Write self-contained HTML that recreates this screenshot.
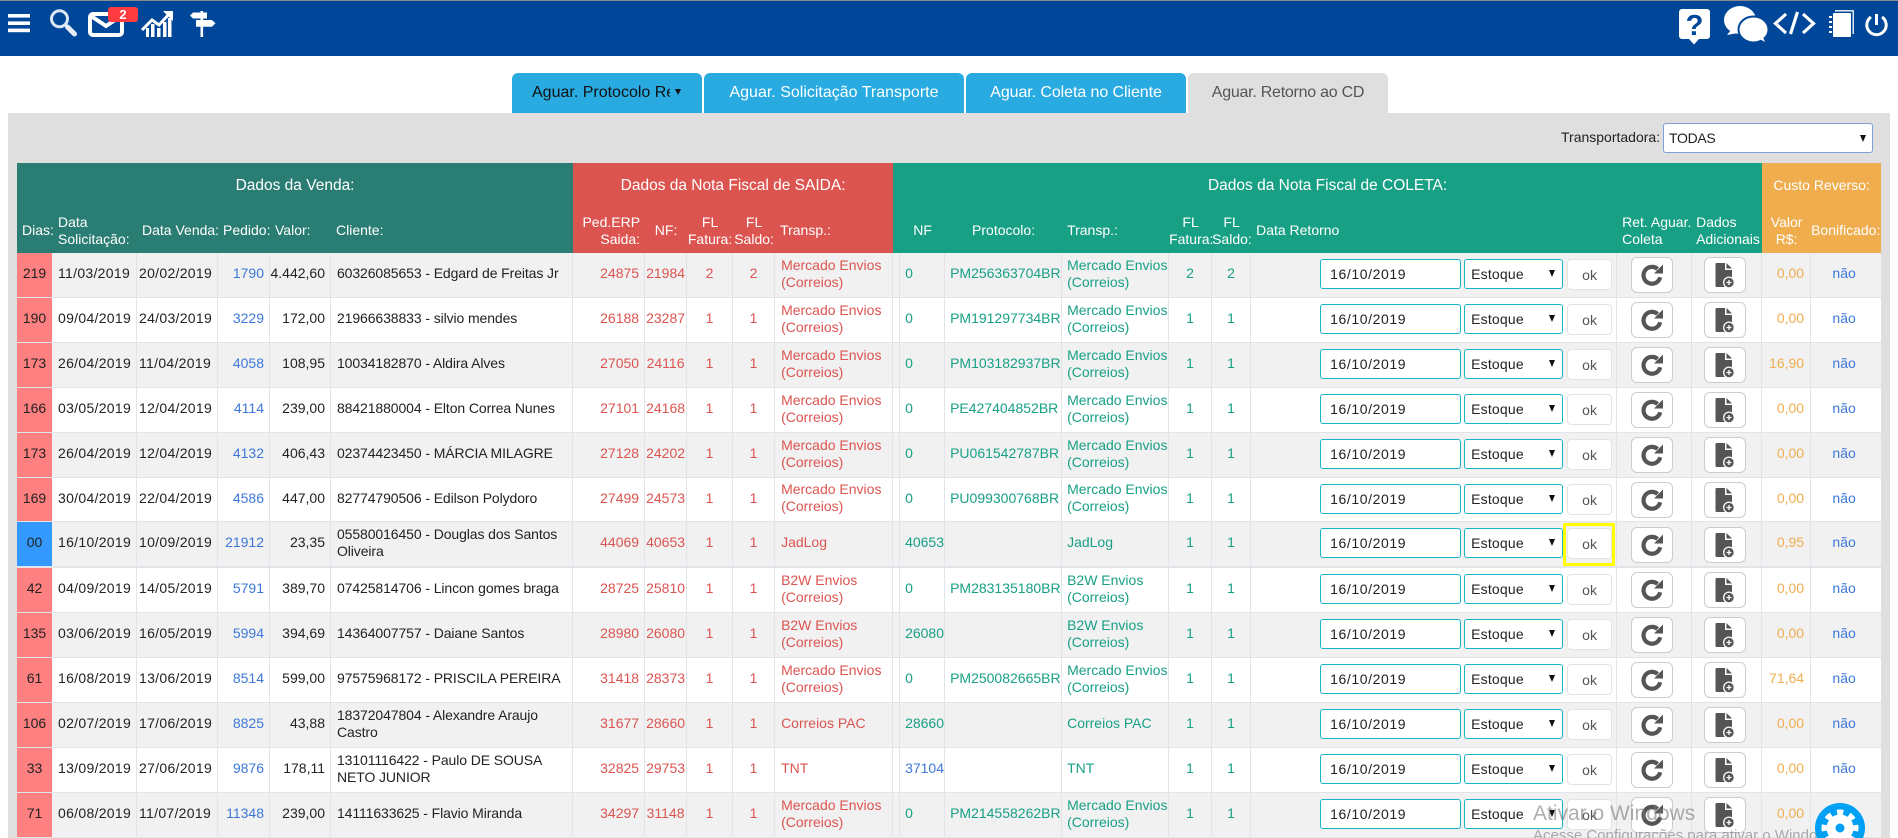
<!DOCTYPE html>
<html lang="pt-BR"><head><meta charset="utf-8"><title>Aguar. Retorno ao CD</title>
<style>
*{box-sizing:border-box}
html,body{margin:0;padding:0;width:1898px;height:838px;overflow:hidden;background:#fff;font:14px/17px "Liberation Sans",sans-serif;color:#222}
.page{position:relative;width:1898px;height:838px;overflow:hidden;background:#fff}
.bar{position:absolute;left:0;top:0;width:1898px;height:56px;background:#004799;border-top:1px solid #8a8a8a}
.ic{position:absolute;left:0;top:0}
.panel{position:absolute;left:8px;top:113px;width:1882px;height:725px;background:#dfdfdf}
.tab{position:absolute;top:73px;height:40px;background:#29abe2;color:#fff;border-radius:6px 6px 0 0;font-size:16px;line-height:39px;text-align:center;white-space:nowrap;overflow:hidden}
.t1{left:512px;width:190px;color:#111;text-align:left;padding-left:20px}
.t1 span{display:block;width:138px;overflow:hidden}
.t1:after{content:"";position:absolute;left:163px;top:16px;border:3.5px solid transparent;border-top:6px solid #111;border-bottom:0}
.lbl{position:absolute;left:1561px;top:129px;color:#222;white-space:nowrap}
.sel{position:absolute;left:1663px;top:123px;width:210px;height:30px;background:#fff;border:1px solid #7f9fd6;border-radius:3px;font:14px "Liberation Sans",sans-serif;letter-spacing:-.3px;color:#222;padding-left:5px;appearance:none;-webkit-appearance:none}
.arr{position:absolute;left:1860px;top:135px;border:3.5px solid transparent;border-top:7px solid #111;border-bottom:0}
table{position:absolute;left:17px;top:163px;width:1864px;border-collapse:separate;border-spacing:0;table-layout:fixed}
th{font-weight:400;color:#fff;padding:0;height:45px;text-align:left;white-space:nowrap}
.g1{background:#2a7d73}.g2{background:#dc5450}.g3{background:#18a085}.g4{background:#f0ad4e}
.h{font-size:15.5px;text-align:center}
.c{text-align:center}.r{text-align:right;padding-right:5px}.p{padding-left:5px}
td{height:45px;padding:0 0 3px;border-right:1px solid #e1e4e8;border-bottom:1px solid #e1e4e8;vertical-align:middle;white-space:nowrap;position:relative;background:#fff}
tbody tr:nth-child(odd) td{background:#f1f1f2}
tbody td:nth-child(1){background:#ff8080!important;text-align:center;border-right-color:#f1f1f2}
tbody td.bl{background:#3399ff!important}
td:nth-child(2){padding-left:5px;letter-spacing:.3px}
td:nth-child(3){padding-left:2px;letter-spacing:.3px}
td:nth-child(4){text-align:right;padding-right:5px;color:#3d78d8}
td:nth-child(5){text-align:right;padding-right:5px}
td:nth-child(6){padding-left:6px;letter-spacing:-.1px}
td:nth-child(7){text-align:right;padding-right:5px;color:#dc5450}
td:nth-child(8),td:nth-child(9),td:nth-child(10){text-align:center;color:#dc5450}
td:nth-child(11){padding-left:6px;color:#dc5450}
td:nth-child(13),td:nth-child(14),td:nth-child(15){padding-left:5px;color:#18a085}
td:nth-child(16),td:nth-child(17){text-align:center;color:#18a085}
td:nth-child(21){text-align:right;padding-right:6px;color:#f0ad4e}
td:nth-child(22){text-align:center;padding-right:4px;color:#3d78d8;border-right:0}
td .b{color:#3d78d8}
tbody tr.z td{height:44px}
tbody tr.x td{height:46px;border-bottom:2px solid #e1e4e8}
td input{position:absolute;left:69px;top:6px;width:141px;height:30px;border:1px solid #17b5c9;border-radius:3px;background:#fff;font:14px "Liberation Sans",sans-serif;letter-spacing:.6px;color:#222;padding:0 0 0 9px}
td select{position:absolute;left:213px;top:6px;width:99px;height:30px;border:1px solid #17b5c9;border-radius:3px;background:#fff;font:14px "Liberation Sans",sans-serif;letter-spacing:.2px;color:#222;padding-left:6px;appearance:none;-webkit-appearance:none}
td:nth-child(18):after{content:"";position:absolute;left:298px;top:17px;border:3.5px solid transparent;border-top:7px solid #111;border-bottom:0}
td button{position:absolute;top:6px;left:316px;width:45px;height:31px;border:1px solid #e3e3e3;border-radius:4px;background:#fff;color:#555;font:14px "Liberation Sans",sans-serif;padding:0}
td button.i{top:4px;left:14px;width:42px;height:36px;border:1px solid #ccc;border-radius:6px}
td button.j{left:12px}
td button svg{position:absolute}
.y{position:absolute;left:312px;top:1px;width:52px;height:43px;border:3px solid #ff0}
.gear{position:absolute;left:1815px;top:803px}
.wm{position:absolute;left:1533px;top:802px;font-size:21px;line-height:24px;color:rgba(120,120,120,.6);white-space:nowrap}
.wm2{position:absolute;left:1533px;top:827px;font-size:15px;line-height:18px;color:rgba(120,120,120,.6);white-space:nowrap}
</style></head><body>
<svg width="0" height="0" style="position:absolute">
<symbol id="rf" viewBox="0 0 22 22"><path d="M16.600 5A8.440 8.440 0 1 0 19.200 13.300" fill="none" stroke="#555" stroke-width="4.200"/><path d="M13 9.500H22V.5z" fill="#555"/></symbol>
<symbol id="dc" viewBox="0 0 24 26"><path d="M1.500 0H10V7H17V23a1 1 0 0 1-1 1H1.500a1 1 0 0 1-1-1V1a1 1 0 0 1 1-1z" fill="#555"/><path d="M11.500 0L17 5.500H11.500z" fill="#555"/><circle cx="14" cy="19.500" r="6" fill="#fff"/><circle cx="14" cy="19.500" r="4.700" fill="#555"/><path d="M11.500 19.500h5M14 17v5" stroke="#fff" stroke-width="1.300"/></symbol>
</svg>
<div class="page">
<div class="bar"></div>
<svg class="ic" width="1898" height="56" viewBox="0 0 1898 56">
<g fill="#fff"><rect x="8" y="14" width="22" height="3.6"/><rect x="8" y="21.400" width="22" height="3.6"/><rect x="8" y="28.600" width="22" height="3.6"/></g>
<circle cx="59.500" cy="18.800" r="8" fill="none" stroke="#dbe8f4" stroke-width="3"/><path d="M67.500 27L74.500 34" stroke="#e6eff8" stroke-width="5" stroke-linecap="round"/>
<rect x="90" y="14" width="32" height="21" rx="3" fill="none" stroke="#fff" stroke-width="4"/><path d="M91 16L106 26L121 16" fill="none" stroke="#fff" stroke-width="4"/>
<rect x="108" y="7" width="30" height="15" rx="3" fill="#ff3b3f"/><text x="123" y="19" font-size="13" font-weight="700" fill="#fff" text-anchor="middle" font-family="Liberation Sans">2</text>
<path d="M142 30L152 20L159 25L170 13" fill="none" stroke="#fff" stroke-width="3"/><path d="M163 11H173V21z" fill="#fff"/>
<g fill="#fff"><rect x="146" y="28" width="3" height="9"/><rect x="151" y="24" width="3.5" height="13"/><rect x="157" y="28" width="3.5" height="9"/><rect x="163" y="22" width="3.5" height="15"/><rect x="168" y="18" width="3.5" height="19"/></g>
<g fill="#fff"><rect x="200.500" y="11" width="2.6" height="26"/><path d="M193 12.500H207V18.500H193L190 15.500z"/><path d="M196 20H212L215.500 23.300L212 26.700H196z"/></g>
<path d="M1682 9H1707a3 3 0 0 1 3 3V36a3 3 0 0 1-3 3H1699L1694 44.500L1689 39H1682a3 3 0 0 1-3-3V12a3 3 0 0 1 3-3z" fill="#fff"/>
<text x="1694.500" y="35" font-size="29" font-weight="700" fill="#004799" text-anchor="middle" font-family="Liberation Sans">?</text>
<ellipse cx="1740" cy="20" rx="16" ry="14" fill="#fff"/><path d="M1731 30L1727 35L1738 33z" fill="#fff"/>
<ellipse cx="1753.500" cy="29.500" rx="15" ry="13" fill="#fff" stroke="#004799" stroke-width="2"/><path d="M1758 38L1765 42L1762 35z" fill="#fff"/>
<g fill="none" stroke="#fff" stroke-width="3.200"><path d="M1786 14L1775.500 23.500L1786 33"/><path d="M1797.500 12L1790.500 34"/><path d="M1803 14L1813.500 23.500L1803 33"/></g>
<rect x="1833" y="13" width="18" height="24" rx="1" fill="#fff"/><path d="M1835 10.800H1853.200V34" fill="none" stroke="#fff" stroke-width="1.300"/>
<g fill="#fff"><rect x="1829" y="16" width="3" height="2"/><rect x="1829" y="21" width="3" height="2"/><rect x="1829" y="26" width="3" height="2"/><rect x="1829" y="31" width="3" height="2"/></g>
<path d="M1871 17A9.700 9.700 0 1 0 1882 17" fill="none" stroke="#fff" stroke-width="3"/><path d="M1876.500 14V25" stroke="#fff" stroke-width="3"/>
</svg>
<div class="panel"></div>
<div class="tab t1"><span>Aguar. Protocolo Reverso</span></div>
<div class="tab" style="left:704px;width:260px">Aguar. Solicitação Transporte</div>
<div class="tab" style="left:966px;width:220px;letter-spacing:-.08px">Aguar. Coleta no Cliente</div>
<div class="tab" style="left:1188px;width:200px;background:#dfdfdf;color:#555;letter-spacing:-.25px">Aguar. Retorno ao CD</div>
<div class="lbl">Transportadora:</div>
<select class="sel"><option>TODAS</option></select><div class="arr"></div>
<table>
<colgroup><col style="width:36px"><col style="width:84px"><col style="width:81px"><col style="width:52px"><col style="width:61px"><col style="width:242px"><col style="width:72px"><col style="width:42px"><col style="width:46px"><col style="width:42px"><col style="width:118px"><col style="width:7px"><col style="width:45px"><col style="width:117px"><col style="width:107px"><col style="width:43px"><col style="width:39px"><col style="width:366px"><col style="width:75px"><col style="width:70px"><col style="width:49px"><col style="width:70px"></colgroup>
<thead>
<tr><th colspan="6" class="g1 h">Dados da Venda:</th><th colspan="5" class="g2 h">Dados da Nota Fiscal de SAIDA:</th><th colspan="9" class="g3 h">Dados da Nota Fiscal de COLETA:</th><th colspan="2" class="g4 c">Custo Reverso:</th></tr>
<tr>
<th class="g1" style="padding-left:5px">Dias:</th><th class="g1 p">Data<br>Solicitação:</th><th class="g1 p">Data Venda:</th><th class="g1 p">Pedido:</th><th class="g1 p">Valor:</th><th class="g1 p">Cliente:</th>
<th class="g2 r">Ped.ERP<br>Saida:</th><th class="g2 c">NF:</th><th class="g2 c">FL<br>Fatura:</th><th class="g2 c">FL<br>Saldo:</th><th class="g2 p">Transp.:</th>
<th class="g3"></th><th class="g3 c">NF</th><th class="g3 c">Protocolo:</th><th class="g3 p">Transp.:</th><th class="g3 c">FL<br>Fatura:</th><th class="g3 c">FL<br>Saldo:</th><th class="g3 p">Data Retorno</th><th class="g3 p">Ret. Aguar.<br>Coleta</th><th class="g3" style="padding-left:4px">Dados<br>Adicionais</th>
<th class="g4 c">Valor<br>R$:</th><th class="g4">Bonificado:</th>
</tr>
</thead>
<tbody>
<tr><td>219</td><td>11/03/2019</td><td>20/02/2019</td><td>1790</td><td>4.442,60</td><td>60326085653 - Edgard de Freitas Jr</td><td>24875</td><td>21984</td><td>2</td><td>2</td><td>Mercado Envios<br>(Correios)</td><td></td><td>0</td><td>PM256363704BR</td><td>Mercado Envios<br>(Correios)</td><td>2</td><td>2</td><td><input value="16/10/2019"><select><option>Estoque</option></select><button>ok</button></td><td><button class="i"><svg style="left:9px;top:6px" width="22" height="22"><use href="#rf"/></svg></button></td><td><button class="i j"><svg style="left:10px;top:5px" width="24" height="26"><use href="#dc"/></svg></button></td><td>0,00</td><td>não</td></tr>
<tr><td>190</td><td>09/04/2019</td><td>24/03/2019</td><td>3229</td><td>172,00</td><td>21966638833 - silvio mendes</td><td>26188</td><td>23287</td><td>1</td><td>1</td><td>Mercado Envios<br>(Correios)</td><td></td><td>0</td><td>PM191297734BR</td><td>Mercado Envios<br>(Correios)</td><td>1</td><td>1</td><td><input value="16/10/2019"><select><option>Estoque</option></select><button>ok</button></td><td><button class="i"><svg style="left:9px;top:6px" width="22" height="22"><use href="#rf"/></svg></button></td><td><button class="i j"><svg style="left:10px;top:5px" width="24" height="26"><use href="#dc"/></svg></button></td><td>0,00</td><td>não</td></tr>
<tr><td>173</td><td>26/04/2019</td><td>11/04/2019</td><td>4058</td><td>108,95</td><td>10034182870 - Aldira Alves</td><td>27050</td><td>24116</td><td>1</td><td>1</td><td>Mercado Envios<br>(Correios)</td><td></td><td>0</td><td>PM103182937BR</td><td>Mercado Envios<br>(Correios)</td><td>1</td><td>1</td><td><input value="16/10/2019"><select><option>Estoque</option></select><button>ok</button></td><td><button class="i"><svg style="left:9px;top:6px" width="22" height="22"><use href="#rf"/></svg></button></td><td><button class="i j"><svg style="left:10px;top:5px" width="24" height="26"><use href="#dc"/></svg></button></td><td>16,90</td><td>não</td></tr>
<tr><td>166</td><td>03/05/2019</td><td>12/04/2019</td><td>4114</td><td>239,00</td><td>88421880004 - Elton Correa Nunes</td><td>27101</td><td>24168</td><td>1</td><td>1</td><td>Mercado Envios<br>(Correios)</td><td></td><td>0</td><td>PE427404852BR</td><td>Mercado Envios<br>(Correios)</td><td>1</td><td>1</td><td><input value="16/10/2019"><select><option>Estoque</option></select><button>ok</button></td><td><button class="i"><svg style="left:9px;top:6px" width="22" height="22"><use href="#rf"/></svg></button></td><td><button class="i j"><svg style="left:10px;top:5px" width="24" height="26"><use href="#dc"/></svg></button></td><td>0,00</td><td>não</td></tr>
<tr><td>173</td><td>26/04/2019</td><td>12/04/2019</td><td>4132</td><td>406,43</td><td>02374423450 - MÁRCIA MILAGRE</td><td>27128</td><td>24202</td><td>1</td><td>1</td><td>Mercado Envios<br>(Correios)</td><td></td><td>0</td><td>PU061542787BR</td><td>Mercado Envios<br>(Correios)</td><td>1</td><td>1</td><td><input value="16/10/2019"><select><option>Estoque</option></select><button>ok</button></td><td><button class="i"><svg style="left:9px;top:6px" width="22" height="22"><use href="#rf"/></svg></button></td><td><button class="i j"><svg style="left:10px;top:5px" width="24" height="26"><use href="#dc"/></svg></button></td><td>0,00</td><td>não</td></tr>
<tr class="z"><td>169</td><td>30/04/2019</td><td>22/04/2019</td><td>4586</td><td>447,00</td><td>82774790506 - Edilson Polydoro</td><td>27499</td><td>24573</td><td>1</td><td>1</td><td>Mercado Envios<br>(Correios)</td><td></td><td>0</td><td>PU099300768BR</td><td>Mercado Envios<br>(Correios)</td><td>1</td><td>1</td><td><input value="16/10/2019"><select><option>Estoque</option></select><button>ok</button></td><td><button class="i"><svg style="left:9px;top:6px" width="22" height="22"><use href="#rf"/></svg></button></td><td><button class="i j"><svg style="left:10px;top:5px" width="24" height="26"><use href="#dc"/></svg></button></td><td>0,00</td><td>não</td></tr>
<tr class="x"><td class="bl">00</td><td>16/10/2019</td><td>10/09/2019</td><td>21912</td><td>23,35</td><td>05580016450 - Douglas dos Santos<br>Oliveira</td><td>44069</td><td>40653</td><td>1</td><td>1</td><td>JadLog</td><td></td><td>40653</td><td></td><td>JadLog</td><td>1</td><td>1</td><td><input value="16/10/2019"><select><option>Estoque</option></select><button>ok</button><div class="y"></div></td><td><button class="i" style="top:5px"><svg style="left:9px;top:6px" width="22" height="22"><use href="#rf"/></svg></button></td><td><button class="i j" style="top:5px"><svg style="left:10px;top:5px" width="24" height="26"><use href="#dc"/></svg></button></td><td>0,95</td><td>não</td></tr>
<tr><td>42</td><td>04/09/2019</td><td>14/05/2019</td><td>5791</td><td>389,70</td><td>07425814706 - Lincon gomes braga</td><td>28725</td><td>25810</td><td>1</td><td>1</td><td>B2W Envios<br>(Correios)</td><td></td><td>0</td><td>PM283135180BR</td><td>B2W Envios<br>(Correios)</td><td>1</td><td>1</td><td><input value="16/10/2019"><select><option>Estoque</option></select><button>ok</button></td><td><button class="i"><svg style="left:9px;top:6px" width="22" height="22"><use href="#rf"/></svg></button></td><td><button class="i j"><svg style="left:10px;top:5px" width="24" height="26"><use href="#dc"/></svg></button></td><td>0,00</td><td>não</td></tr>
<tr><td>135</td><td>03/06/2019</td><td>16/05/2019</td><td>5994</td><td>394,69</td><td>14364007757 - Daiane Santos</td><td>28980</td><td>26080</td><td>1</td><td>1</td><td>B2W Envios<br>(Correios)</td><td></td><td>26080</td><td></td><td>B2W Envios<br>(Correios)</td><td>1</td><td>1</td><td><input value="16/10/2019"><select><option>Estoque</option></select><button>ok</button></td><td><button class="i"><svg style="left:9px;top:6px" width="22" height="22"><use href="#rf"/></svg></button></td><td><button class="i j"><svg style="left:10px;top:5px" width="24" height="26"><use href="#dc"/></svg></button></td><td>0,00</td><td>não</td></tr>
<tr><td>61</td><td>16/08/2019</td><td>13/06/2019</td><td>8514</td><td>599,00</td><td>97575968172 - PRISCILA PEREIRA</td><td>31418</td><td>28373</td><td>1</td><td>1</td><td>Mercado Envios<br>(Correios)</td><td></td><td>0</td><td>PM250082665BR</td><td>Mercado Envios<br>(Correios)</td><td>1</td><td>1</td><td><input value="16/10/2019"><select><option>Estoque</option></select><button>ok</button></td><td><button class="i"><svg style="left:9px;top:6px" width="22" height="22"><use href="#rf"/></svg></button></td><td><button class="i j"><svg style="left:10px;top:5px" width="24" height="26"><use href="#dc"/></svg></button></td><td>71,64</td><td>não</td></tr>
<tr><td>106</td><td>02/07/2019</td><td>17/06/2019</td><td>8825</td><td>43,88</td><td>18372047804 - Alexandre Araujo<br>Castro</td><td>31677</td><td>28660</td><td>1</td><td>1</td><td>Correios PAC</td><td></td><td>28660</td><td></td><td>Correios PAC</td><td>1</td><td>1</td><td><input value="16/10/2019"><select><option>Estoque</option></select><button>ok</button></td><td><button class="i"><svg style="left:9px;top:6px" width="22" height="22"><use href="#rf"/></svg></button></td><td><button class="i j"><svg style="left:10px;top:5px" width="24" height="26"><use href="#dc"/></svg></button></td><td>0,00</td><td>não</td></tr>
<tr><td>33</td><td>13/09/2019</td><td>27/06/2019</td><td>9876</td><td>178,11</td><td>13101116422 - Paulo DE SOUSA<br>NETO JUNIOR</td><td>32825</td><td>29753</td><td>1</td><td>1</td><td>TNT</td><td></td><td><span class="b">37104</span></td><td></td><td>TNT</td><td>1</td><td>1</td><td><input value="16/10/2019"><select><option>Estoque</option></select><button>ok</button></td><td><button class="i"><svg style="left:9px;top:6px" width="22" height="22"><use href="#rf"/></svg></button></td><td><button class="i j"><svg style="left:10px;top:5px" width="24" height="26"><use href="#dc"/></svg></button></td><td>0,00</td><td>não</td></tr>
<tr><td>71</td><td>06/08/2019</td><td>11/07/2019</td><td>11348</td><td>239,00</td><td>14111633625 - Flavio Miranda</td><td>34297</td><td>31148</td><td>1</td><td>1</td><td>Mercado Envios<br>(Correios)</td><td></td><td>0</td><td>PM214558262BR</td><td>Mercado Envios<br>(Correios)</td><td>1</td><td>1</td><td><input value="16/10/2019"><select><option>Estoque</option></select><button>ok</button></td><td><button class="i"><svg style="left:9px;top:6px" width="22" height="22"><use href="#rf"/></svg></button></td><td><button class="i j"><svg style="left:10px;top:5px" width="24" height="26"><use href="#dc"/></svg></button></td><td>0,00</td><td>não</td></tr>
</tbody>
</table>
<div class="wm">Ativar o Windows</div>
<div class="wm2">Acesse Configurações para ativar o Windows.</div>
<svg class="gear" width="50" height="50" viewBox="0 0 50 50"><circle cx="25" cy="25" r="25" fill="#00a0f5"/><circle cx="25" cy="25" r="13.500" fill="#fff"/><circle cx="25" cy="25" r="15" fill="none" stroke="#fff" stroke-width="7" stroke-dasharray="5.890 5.890" stroke-dashoffset="2.900"/><circle cx="25" cy="25" r="4.500" fill="#00a0f5"/></svg>
</div>
</body></html>
